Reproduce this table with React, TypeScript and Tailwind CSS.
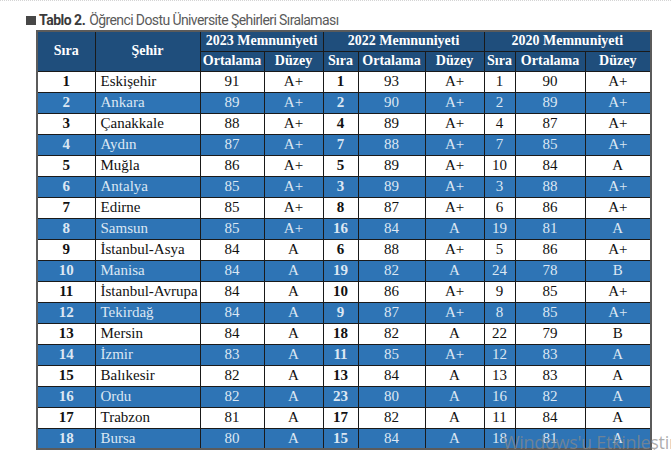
import React from 'react'

type Row = [number, string, number, string, number, number, string, number, number, string]

const rows: Row[] = [
    [1, 'Eskişehir', 91, 'A+', 1, 93, 'A+', 1, 90, 'A+'],
    [2, 'Ankara', 89, 'A+', 2, 90, 'A+', 2, 89, 'A+'],
    [3, 'Çanakkale', 88, 'A+', 4, 89, 'A+', 4, 87, 'A+'],
    [4, 'Aydın', 87, 'A+', 7, 88, 'A+', 7, 85, 'A+'],
    [5, 'Muğla', 86, 'A+', 5, 89, 'A+', 10, 84, 'A'],
    [6, 'Antalya', 85, 'A+', 3, 89, 'A+', 3, 88, 'A+'],
    [7, 'Edirne', 85, 'A+', 8, 87, 'A+', 6, 86, 'A+'],
    [8, 'Samsun', 85, 'A+', 16, 84, 'A', 19, 81, 'A'],
    [9, 'İstanbul-Asya', 84, 'A', 6, 88, 'A+', 5, 86, 'A+'],
    [10, 'Manisa', 84, 'A', 19, 82, 'A', 24, 78, 'B'],
    [11, 'İstanbul-Avrupa', 84, 'A', 10, 86, 'A+', 9, 85, 'A+'],
    [12, 'Tekirdağ', 84, 'A', 9, 87, 'A+', 8, 85, 'A+'],
    [13, 'Mersin', 84, 'A', 18, 82, 'A', 22, 79, 'B'],
    [14, 'İzmir', 83, 'A', 11, 85, 'A+', 12, 83, 'A'],
    [15, 'Balıkesir', 82, 'A', 13, 84, 'A', 13, 83, 'A'],
    [16, 'Ordu', 82, 'A', 23, 80, 'A', 16, 82, 'A'],
    [17, 'Trabzon', 81, 'A', 17, 82, 'A', 11, 84, 'A'],
    [18, 'Bursa', 80, 'A', 15, 84, 'A', 18, 81, 'A'],
]

const th = 'border border-[#1a1a1a] bg-[#1f4e7c] text-white font-bold text-center text-[14px] h-[20px] p-0 leading-none whitespace-nowrap'
const td = 'border border-[#1a1a1a] text-center h-[21px] p-0 leading-none whitespace-nowrap'

const App: React.FC = () => {
    return (
        <div className="relative w-[671px] h-[450px] overflow-hidden bg-white border-t border-dotted border-[#d4d4d4]">
            {/* Title */}
            <div className="flex items-center pl-[26px] pt-[9px] h-[29px] text-[14px] leading-none font-['Roboto',sans-serif]">
                <span className="w-[10px] h-[9px] bg-[#474747] mr-[3px]" />
                <span className="font-bold text-[#3a3a3a] tracking-[-0.5px]">Tablo 2.</span>
                <span className="ml-[4px] text-[#5a5a5a] tracking-[-0.6px]">Öğrenci Dostu Üniversite Şehirleri Sıralaması</span>
            </div>

            {/* Table */}
            <table className="ml-[36px] w-[614px] table-fixed border-collapse border-2 border-[#5b5b5b] font-['Liberation_Serif',serif] text-[15px]">
                <colgroup>
                    <col className="w-[58px]" />
                    <col className="w-[105px]" />
                    <col className="w-[64px]" />
                    <col className="w-[59px]" />
                    <col className="w-[35px]" />
                    <col className="w-[67px]" />
                    <col className="w-[59px]" />
                    <col className="w-[31px]" />
                    <col className="w-[70px]" />
                    <col className="w-[66px]" />
                </colgroup>
                <thead>
                    <tr>
                        <th rowSpan={2} className={th}>Sıra</th>
                        <th rowSpan={2} className={th}>Şehir</th>
                        <th colSpan={2} className={th}>2023 Memnuniyeti</th>
                        <th colSpan={3} className={th}>2022 Memnuniyeti</th>
                        <th colSpan={3} className={th}>2020 Memnuniyeti</th>
                    </tr>
                    <tr>
                        <th className={th}>Ortalama</th>
                        <th className={th}>Düzey</th>
                        <th className={th}>Sıra</th>
                        <th className={th}>Ortalama</th>
                        <th className={th}>Düzey</th>
                        <th className={th}>Sıra</th>
                        <th className={th}>Ortalama</th>
                        <th className={th}>Düzey</th>
                    </tr>
                </thead>
                <tbody>
                    {rows.map((r, i) => {
                        const blue = i % 2 === 1
                        return (
                            <tr key={r[0]} className={blue ? 'bg-[#2e74b5] text-[#dce7f3]' : 'bg-white text-[#111]'}>
                                <td className={`${td} font-bold`}>{r[0]}</td>
                                <td className={`${td} text-left pl-[5px]`}>{r[1]}</td>
                                <td className={td}>{r[2]}</td>
                                <td className={td}>{r[3]}</td>
                                <td className={`${td} font-bold`}>{r[4]}</td>
                                <td className={td}>{r[5]}</td>
                                <td className={td}>{r[6]}</td>
                                <td className={td}>{r[7]}</td>
                                <td className={td}>{r[8]}</td>
                                <td className={td}>{r[9]}</td>
                            </tr>
                        )
                    })}
                </tbody>
            </table>

            {/* Activation watermark */}
            <div className="absolute left-[503px] top-[432px] text-[18px] leading-none tracking-[-0.3px] text-[#8a8a8a]/70 font-['Open_Sans',sans-serif] whitespace-nowrap">
                Windows'u Etkinleştir
            </div>
        </div>
    )
}

export default App
